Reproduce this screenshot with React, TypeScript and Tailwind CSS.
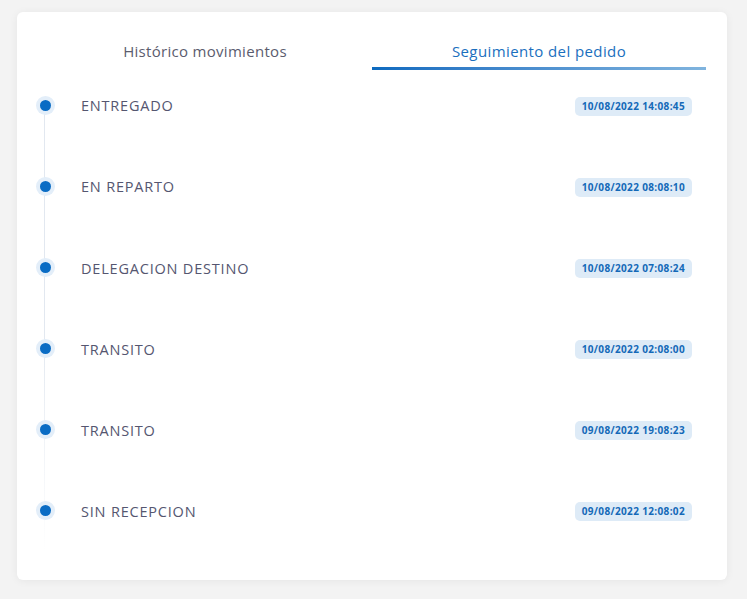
import React from 'react';

interface TrackingEvent {
  status: string;
  date: string;
}

const events: TrackingEvent[] = [
  { status: 'ENTREGADO', date: '10/08/2022 14:08:45' },
  { status: 'EN REPARTO', date: '10/08/2022 08:08:10' },
  { status: 'DELEGACION DESTINO', date: '10/08/2022 07:08:24' },
  { status: 'TRANSITO', date: '10/08/2022 02:08:00' },
  { status: 'TRANSITO', date: '09/08/2022 19:08:23' },
  { status: 'SIN RECEPCION', date: '09/08/2022 12:08:02' },
];

const App: React.FC = () => {
  return (
    <div
      className="min-h-screen bg-[#f3f3f3] pt-[12px] pl-[17px] pr-[20px]"
      style={{ fontFamily: '"Open Sans", "Noto Sans", sans-serif' }}
    >
      <div className="bg-white rounded-md shadow-[0_1px_8px_rgba(0,0,0,0.06)] h-[568px]">
        {/* Tabs */}
        <div className="flex px-[21px]">
          <div className="flex-1 text-center pt-[29px]">
            <div className="text-[15px] leading-5 text-[#5b5c6e] tracking-[0.3px]">Histórico movimientos</div>
            <div className="h-[3px] mt-[6px]" />
          </div>
          <div className="flex-1 text-center pt-[29px]">
            <div className="text-[15px] leading-5 text-[#1a6fbe] tracking-[0.4px]">Seguimiento del pedido</div>
            <div className="h-[3px] mt-[6px] bg-linear-to-r from-[#0b6abf] to-[#80b4de]" />
          </div>
        </div>

        {/* Timeline */}
        <div className="relative mt-[26px] pl-[19px] pr-[35px] flex flex-col gap-[61.2px]">
          <div className="absolute left-[27px] top-[10px] bottom-[-30px] w-px bg-linear-to-b from-[#e2e8f0] via-[#e2e8f0] to-white" />
          {events.map((ev, i) => (
            <div key={i} className="relative flex items-center h-[20px]">
              <div className="w-[19px] h-[19px] -mt-[2px] rounded-full bg-[#e3eef9] flex items-center justify-center shrink-0">
                <div className="w-[11px] h-[11px] rounded-full bg-[#0a6cc4]" />
              </div>
              <div className="ml-[26px] text-[14.5px] text-[#555670] tracking-[0.8px]">{ev.status}</div>
              <div className="ml-auto bg-[#deebf7] text-[#1469b8] text-[10px] font-bold leading-[19px] px-[7px] rounded-[5px] tracking-[0.35px]">
                {ev.date}
              </div>
            </div>
          ))}
        </div>
      </div>
    </div>
  );
};

export default App;
